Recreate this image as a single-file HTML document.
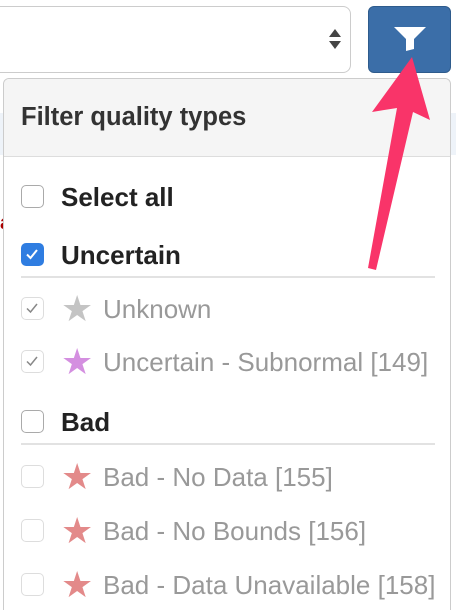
<!DOCTYPE html>
<html><head><style>
html,body{margin:0;width:456px;height:610px;overflow:hidden}
body{background:#fff;font-family:"Liberation Sans",sans-serif;position:relative}
.abs{position:absolute}
.sel{left:-20px;top:6px;width:369px;height:65px;border:1px solid #ccc;border-radius:8px;background:#fff}
.btn{left:368px;top:6px;width:83px;height:67px;background:#3b6ea8;border-radius:6px;border:1px solid #2e5b8c;box-sizing:border-box}
.panel{left:3px;top:78px;width:448px;height:532px;border:1px solid #ccc;border-bottom:none;border-radius:6px 6px 0 0;background:#fff;box-sizing:border-box;overflow:hidden}
.hdr{height:77px;background:#f5f5f5;border-bottom:1px solid #ddd;font-weight:bold;font-size:25.5px;color:#333;line-height:77px;padding-left:17px}
.row{position:absolute;left:17px;height:30px;font-size:26px;line-height:30px}
.cb{position:absolute;left:0;top:3px;width:23px;height:23px;border:1px solid #aaa;border-radius:5px;box-sizing:border-box;background:#fff}
.g .cb{border-color:#ddd}
.b{font-weight:bold;color:#222}
.g{color:#999}
.row span.t{position:absolute;white-space:nowrap}
.star{position:absolute;left:40px;top:-3px;font-size:36px;line-height:36px}
.line{position:absolute;left:17px;width:414px;height:2px;background:#e2e2e2}
</style></head><body>
<div class="abs" style="left:0;top:113px;width:456px;height:42px;background:#eef3f9"></div>
<div class="abs" style="left:0;top:212px;color:#a00;font-size:20px;font-weight:bold">a</div>
<div class="abs sel"></div>
<svg class="abs" style="left:329px;top:29px" width="12" height="22"><polygon points="6,0 12,8 0,8" fill="#444"/><polygon points="0,12 12,12 6,20" fill="#444"/></svg>
<div class="abs btn"></div>
<svg class="abs" style="left:394px;top:25px" width="34" height="28"><polygon points="0,2 32,2 20,14 20,24 12,26 12,14" fill="#fff"/></svg>
<div class="abs panel">
<div class="hdr">Filter quality types</div>
<div class="row b" style="top:103px"><div class="cb"></div><span class="t" style="left:40px">Select all</span></div>
<div class="row b" style="top:161px"><div class="cb" style="background:#2f7de1;border-color:#2f7de1"><svg width="22" height="22" style="position:absolute;left:-1px;top:-1px"><path d="M6 11.5l3.5 3.5 6.5-8" stroke="#fff" stroke-width="2" fill="none"/></svg></div><span class="t" style="left:40px">Uncertain</span></div>
<div class="line" style="top:197px"></div>
<div class="row g" style="top:215px"><div class="cb"><svg width="22" height="22" style="position:absolute;left:-1px;top:-1px"><path d="M6 11.5l3.5 3.5 6.5-8" stroke="#888" stroke-width="1.5" fill="none"/></svg></div><span class="star" style="color:#c4c4c4">★</span><span class="t" style="left:82px">Unknown</span></div>
<div class="row g" style="top:268px"><div class="cb"><svg width="22" height="22" style="position:absolute;left:-1px;top:-1px"><path d="M6 11.5l3.5 3.5 6.5-8" stroke="#888" stroke-width="1.5" fill="none"/></svg></div><span class="star" style="color:#d48fe0">★</span><span class="t" style="left:82px">Uncertain - Subnormal [149]</span></div>
<div class="row b" style="top:328px"><div class="cb"></div><span class="t" style="left:40px">Bad</span></div>
<div class="line" style="top:364px"></div>
<div class="row g" style="top:383px"><div class="cb"></div><span class="star" style="color:#e38a8a">★</span><span class="t" style="left:82px">Bad - No Data [155]</span></div>
<div class="row g" style="top:437px"><div class="cb"></div><span class="star" style="color:#e38a8a">★</span><span class="t" style="left:82px">Bad - No Bounds [156]</span></div>
<div class="row g" style="top:491px"><div class="cb"></div><span class="star" style="color:#e38a8a">★</span><span class="t" style="left:82px">Bad - Data Unavailable [158]</span></div>
</div>
<svg class="abs" style="left:0;top:0" width="456" height="610"><polygon points="412,57 430,120 413,112 376,270 368,268 397,108 372,112" fill="#f93469"/></svg>
</body></html>
